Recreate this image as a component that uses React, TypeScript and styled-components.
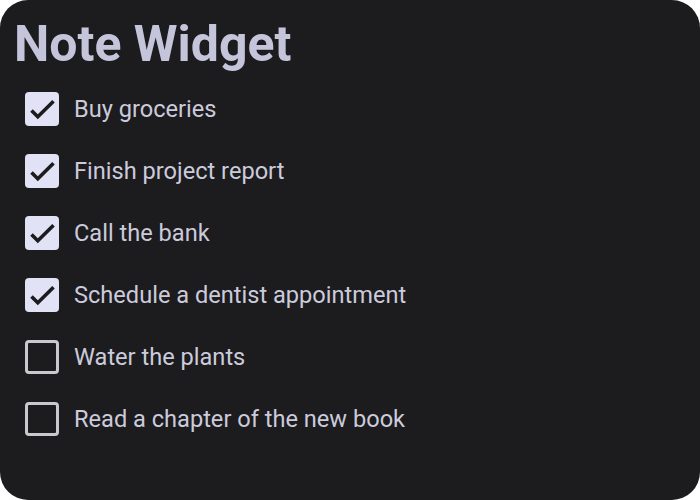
import React from "react";
import styled, { createGlobalStyle } from "styled-components";

const Global = createGlobalStyle`
  html, body { margin: 0; padding: 0; background: #ffffff; }
  body { font-family: Roboto, "Noto Sans", sans-serif; }
`;

const Card = styled.div`
  box-sizing: border-box;
  width: 700px;
  height: 500px;
  background: #1c1b1e;
  border-radius: 28px;
  padding: 14px 15px 0 14px;
  display: flex;
  flex-direction: column;
`;

const Title = styled.h1`
  margin: 0;
  font-family: Roboto, sans-serif;
  font-weight: 700;
  font-size: 50px;
  line-height: 60px;
  color: #c4c5da;
  letter-spacing: 0;
`;

const List = styled.ul`
  list-style: none;
  margin: 18px 0 0 0;
  padding: 0 0 0 11px;
  display: flex;
  flex-direction: column;
  gap: 28px;
`;

const Row = styled.li`
  display: flex;
  align-items: center;
  gap: 15px;
  height: 34px;
`;

const Box = styled.span<{ $checked: boolean }>`
  box-sizing: border-box;
  width: 34px;
  height: 34px;
  border-radius: 4px;
  display: flex;
  align-items: center;
  justify-content: center;
  background: ${(p) => (p.$checked ? "#e2e2f6" : "transparent")};
  border: ${(p) => (p.$checked ? "none" : "3px solid #c9c8cc")};
  flex-shrink: 0;
`;

const Label = styled.span`
  font-family: Roboto, sans-serif;
  font-size: 23.6px;
  color: #cbcbdc;
`;

const Check = () => (
  <svg width="34" height="34" viewBox="0 0 34 34">
    <path d="M6.5 18.5L12.8 24.8L28.5 9.2" fill="none" stroke="#1c1b1e" strokeWidth="3.6" strokeLinecap="butt" />
  </svg>
);

const items = [
  { text: "Buy groceries", done: true },
  { text: "Finish project report", done: true },
  { text: "Call the bank", done: true },
  { text: "Schedule a dentist appointment", done: true },
  { text: "Water the plants", done: false },
  { text: "Read a chapter of the new book", done: false },
];

export default function App() {
  return (
    <>
      <Global />
      <Card>
        <Title>Note Widget</Title>
        <List>
          {items.map((it) => (
            <Row key={it.text}>
              <Box $checked={it.done}>{it.done && <Check />}</Box>
              <Label>{it.text}</Label>
            </Row>
          ))}
        </List>
      </Card>
    </>
  );
}
